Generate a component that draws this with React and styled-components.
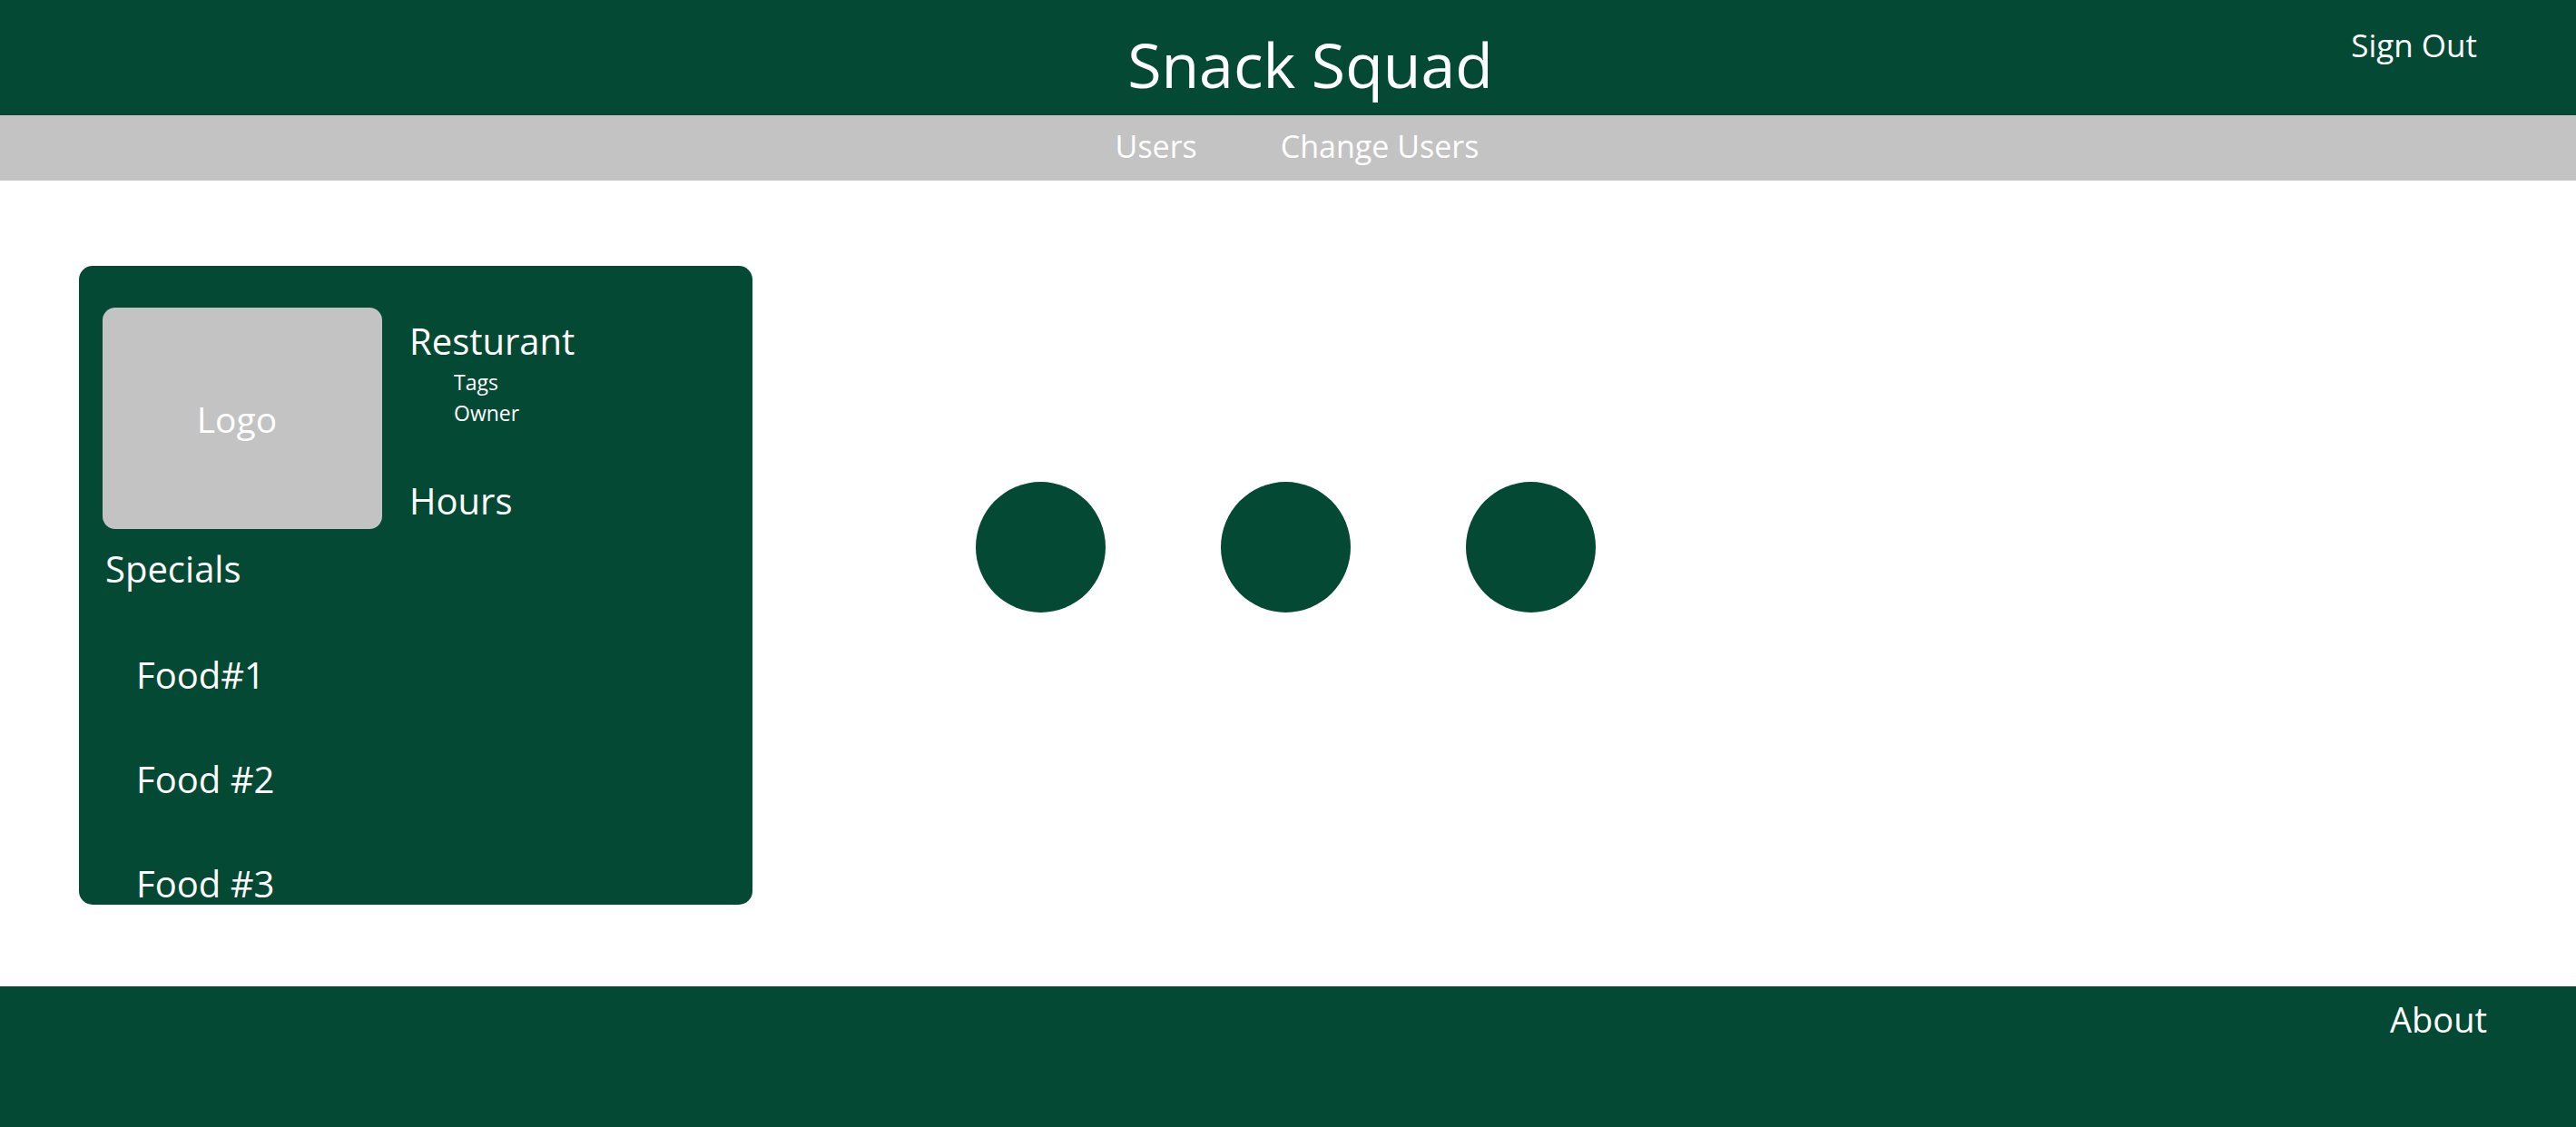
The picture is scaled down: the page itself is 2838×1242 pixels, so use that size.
import React from 'react'
import styled, { createGlobalStyle } from 'styled-components'

const green = '#034933';
const grey = '#c3c3c3';

const GlobalStyle = createGlobalStyle`
body{
    margin: 0;
    background: #ffffff;
    font-family: "Open Sans", "Noto Sans", sans-serif;
}
`;

const specials = ['Food#1', 'Food #2', 'Food #3'];

const App = () => {
    return (
        <Page>
            <GlobalStyle />
            <Header>
                <Title>Snack Squad</Title>
                <SignOut>Sign Out</SignOut>
            </Header>

            <Nav>
                <NavLink>Users</NavLink>
                <NavLink>Change Users</NavLink>
            </Nav>

            <Main>
                <Card>
                    <CardTop>
                        <LogoBox>Logo</LogoBox>
                        <Info>
                            <BigText>Resturant</BigText>
                            <SmallList>
                                <li>Tags</li>
                                <li>Owner</li>
                            </SmallList>
                            <BigText $top="60px">Hours</BigText>
                        </Info>
                    </CardTop>

                    <BigText $top="24px" $left="3px">Specials</BigText>
                    <FoodList>
                        {specials.map((food) => (
                            <li key={food}>{food}</li>
                        ))}
                    </FoodList>
                </Card>

                <Dots>
                    <Dot />
                    <Dot />
                    <Dot />
                </Dots>
            </Main>

            <Footer>
                <FooterLink>About</FooterLink>
            </Footer>
        </Page>
    )
}

export default App

const Page = styled.div`
min-height: 100vh;
display: flex;
flex-direction: column;
color: #ffffff;
`;

const Header = styled.header`
height: 127px;
background: ${green};
display: grid;
grid-template-columns: 1fr auto 1fr;
align-items: start;
`;

const Title = styled.h1`
grid-column: 2;
margin: 0;
padding-top: 37px;
padding-left: 49px;
font-size: 68px;
font-weight: 400;
line-height: 1;
white-space: nowrap;
`;

const SignOut = styled.a`
justify-self: end;
padding-top: 32px;
padding-right: 109px;
font-size: 35px;
line-height: 1;
cursor: pointer;
`;

const Nav = styled.nav`
height: 72px;
box-sizing: border-box;
padding-top: 17px;
padding-left: 20px;
background: ${grey};
display: flex;
justify-content: center;
gap: 92px;
`;

const NavLink = styled.a`
font-size: 34px;
line-height: 1;
color: #ffffff;
cursor: pointer;
`;

const Main = styled.main`
flex: 1;
display: flex;
align-items: flex-start;
padding: 94px 0 0 87px;
`;

const Card = styled.section`
width: 742px;
height: 704px;
box-sizing: border-box;
padding: 46px 0 0 26px;
background: ${green};
border-radius: 15px;
`;

const CardTop = styled.div`
display: flex;
gap: 30px;
`;

const LogoBox = styled.div`
width: 308px;
height: 244px;
background: ${grey};
border-radius: 14px;
display: flex;
align-items: center;
justify-content: center;
font-size: 39px;
line-height: 1;
padding-right: 12px;
box-sizing: border-box;
`;

const Info = styled.div`
display: flex;
flex-direction: column;
padding-top: 17px;
`;

const BigText = styled.div`
font-size: 40px;
line-height: 1;
margin-top: ${(p) => p.$top || '0'};
margin-left: ${(p) => p.$left || '0'};
`;

const SmallList = styled.ul`
list-style: none;
margin: 8px 0 0;
padding-left: 49px;
li{
    font-size: 23px;
    line-height: 34px;
}
`;

const FoodList = styled.ul`
list-style: none;
margin: 77px 0 0;
padding-left: 37px;
display: flex;
flex-direction: column;
gap: 75px;
li{
    font-size: 40px;
    line-height: 1;
}
`;

const Dots = styled.div`
display: flex;
gap: 127px;
margin-top: 238px;
margin-left: 246px;
`;

const Dot = styled.span`
width: 143px;
height: 144px;
border-radius: 50%;
background: ${green};
`;

const Footer = styled.footer`
height: 155px;
box-sizing: border-box;
padding: 17px 98px 0 0;
background: ${green};
display: flex;
justify-content: flex-end;
align-items: flex-start;
`;

const FooterLink = styled.a`
font-size: 38px;
line-height: 1;
cursor: pointer;
`;
